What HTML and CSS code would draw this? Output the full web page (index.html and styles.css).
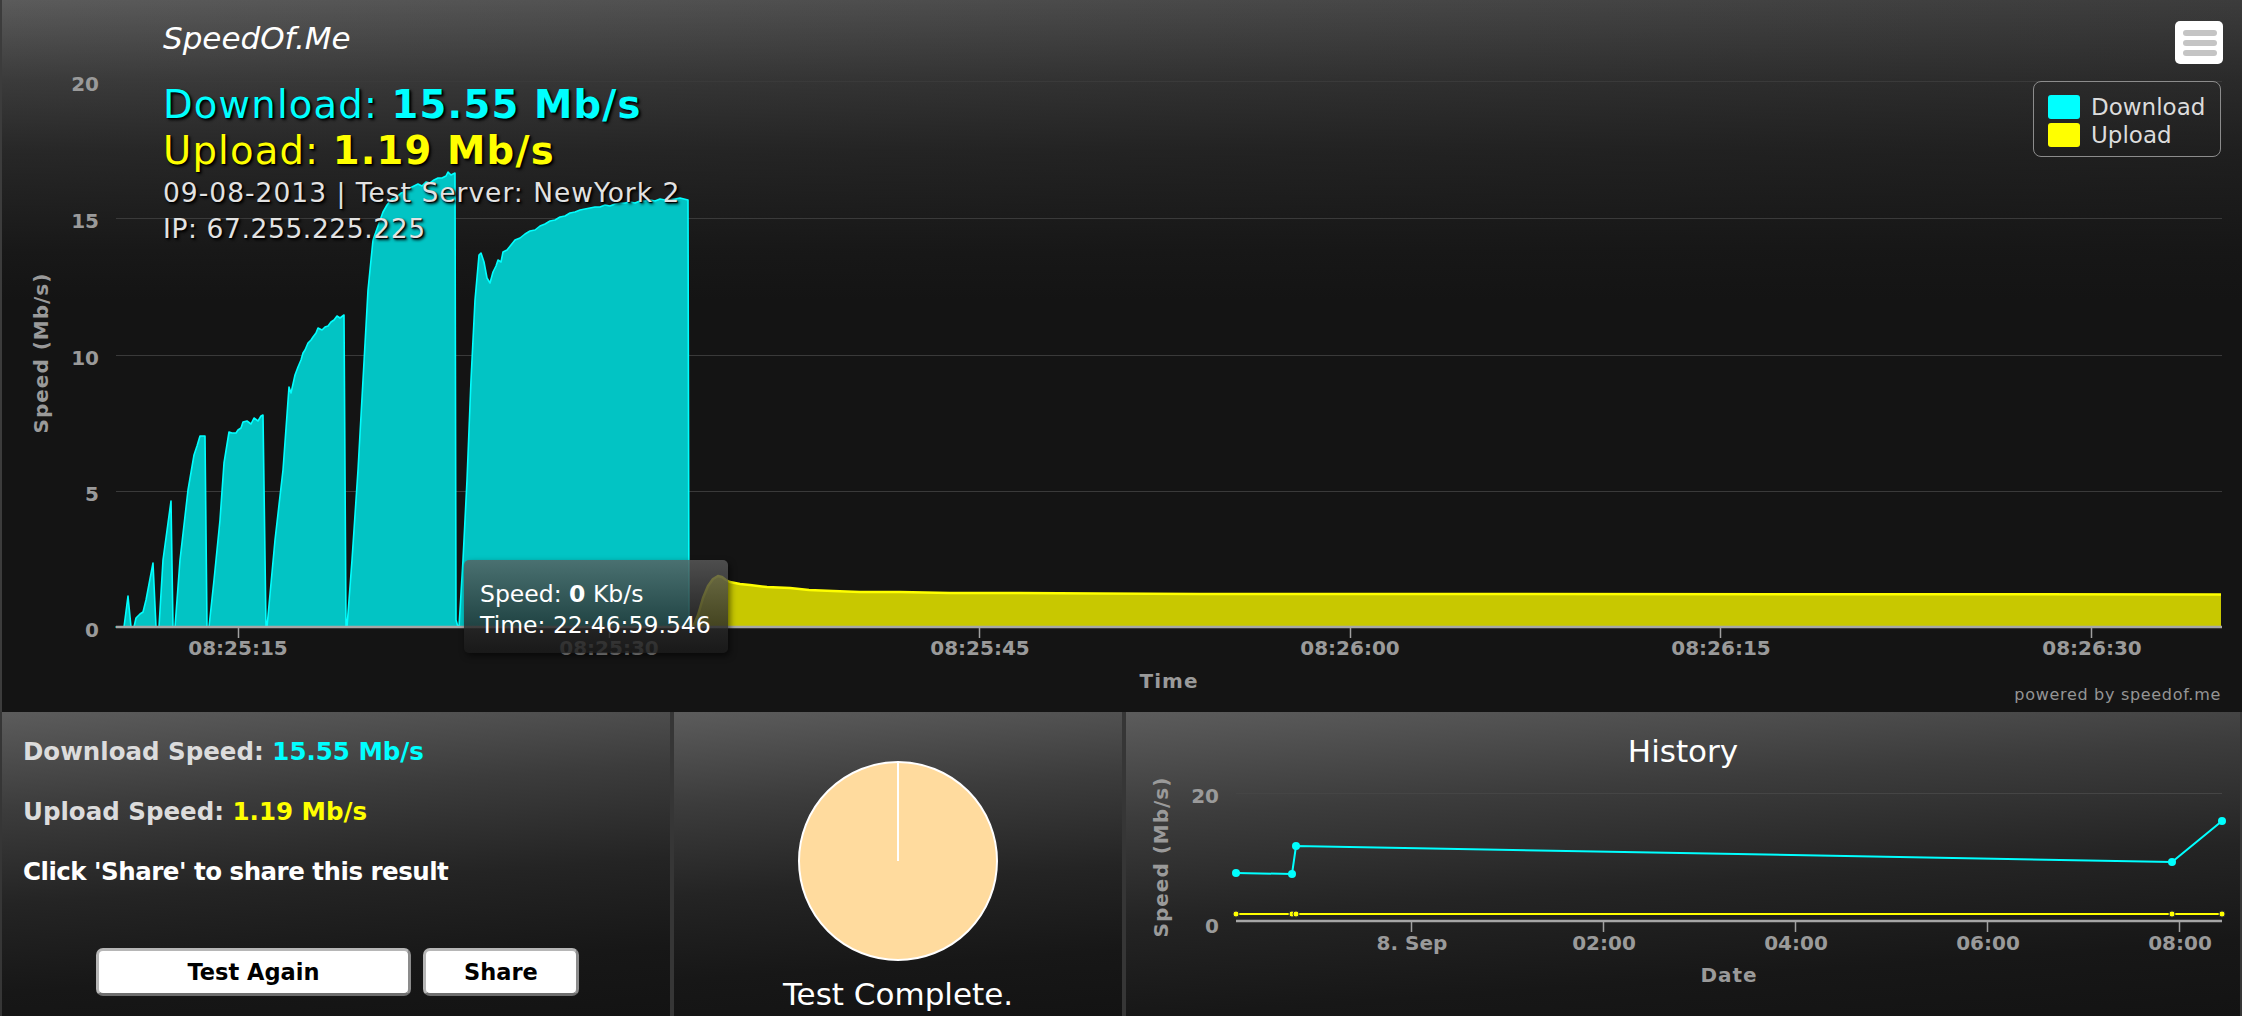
FILE: index.html
```html
<!DOCTYPE html>
<html lang="en">
<head>
<meta charset="utf-8">
<title>SpeedOf.Me</title>
<link rel="stylesheet" href="styles.css">
</head>
<body>
<div class="page">
  <section class="speed-chart">
    <svg class="plot" width="2242" height="712" viewBox="0 0 2242 712">
      <g class="grid">
        <line x1="116" x2="2222" y1="81.5" y2="81.5"/>
        <line x1="116" x2="2222" y1="218.5" y2="218.5"/>
        <line x1="116" x2="2222" y1="355.5" y2="355.5"/>
        <line x1="116" x2="2222" y1="491.5" y2="491.5"/>
      </g>
      <path class="dl-area" d="M116,627 L124,627 L128,596 L131,627 L134,627 L136,618 L140,614 L143,612 L146,600 L153,563 L156,627 L159,627 L163,560 L171,501 L173,627 L175,627 L180,560 L188,490 L194,455 L197,446 L200,436 L205,436 L207,627 L209,627 L214,580 L220,520 L224,463 L229,432 L232,433 L236,433 L238,430 L241,428 L243,422 L247,421 L251,424 L254,418 L258,421 L261,416 L263,415 L266,627 L267,627 L275,540 L283,470 L289,387 L291,393 L295,375 L298,367 L301,360 L303,353 L305,350 L308,343 L311,340 L313,337 L316,333 L318,328 L322,330 L325,327 L328,326 L331,322 L334,320 L337,316 L340,318 L344,315 L346,627 L347,627 L352,560 L358,470 L363,380 L368,290 L373,240 L378,226 L383,212 L387,205 L392,199 L397,197 L401,193 L405,192 L410,188 L414,186 L418,184 L422,186 L426,182 L430,183 L434,180 L438,178 L442,178 L446,176 L448,172 L451,175 L455,173 L456,620 L458,627 L459,627 L463,560 L467,480 L471,380 L475,300 L479,255 L481,253 L484,262 L487,278 L490,283 L493,272 L496,266 L498,260 L501,262 L503,252 L507,250 L511,245 L515,240 L520,238 L525,234 L530,231 L535,230 L540,226 L545,224 L550,221 L555,220 L560,217 L565,216 L570,213 L575,212 L580,210 L585,209 L590,208 L595,207 L600,207 L605,205 L610,206 L615,204 L620,203 L625,203 L630,202 L635,203 L640,201 L645,201 L650,200 L655,201 L660,199 L665,200 L670,199 L675,199 L680,198 L684,199 L688,200 L689,627 Z"/>
      <path class="ul-area" d="M689,627 L693,627 L698,615 L703,598 L708,586 L713,579 L718,576 L722,577 L726,580 L730,582 L740,584 L750,585 L767,587 L790,588 L809,590 L833,591 L860,592 L900,592 L950,593 L1019,593 L1100,593.5 L1200,594 L1500,594 L2221,594.5 L2221,627 Z"/>
      <polyline class="ul-line" points="693,627 698,615 703,598 708,586 713,579 718,576 722,577 726,580 730,582 740,584 750,585 767,587 790,588 809,590 833,591 860,592 900,592 950,593 1019,593 1100,593.5 1200,594 1500,594 2221,594.5"/>
      <line class="axis" x1="116" x2="2222" y1="627" y2="627"/>
      <g class="ticks">
        <line x1="238.5" x2="238.5" y1="628" y2="638"/>
        <line x1="609.5" x2="609.5" y1="628" y2="638"/>
        <line x1="979.5" x2="979.5" y1="628" y2="638"/>
        <line x1="1350.5" x2="1350.5" y1="628" y2="638"/>
        <line x1="1720.5" x2="1720.5" y1="628" y2="638"/>
        <line x1="2091.5" x2="2091.5" y1="628" y2="638"/>
      </g>
      <g class="axis-label x-labels">
        <text x="238" y="655">08:25:15</text>
        <text x="609" y="655">08:25:30</text>
        <text x="980" y="655">08:25:45</text>
        <text x="1350" y="655">08:26:00</text>
        <text x="1721" y="655">08:26:15</text>
        <text x="2092" y="655">08:26:30</text>
      </g>
      <g class="axis-label y-labels">
        <text x="99" y="91">20</text>
        <text x="99" y="228">15</text>
        <text x="99" y="365">10</text>
        <text x="99" y="501">5</text>
        <text x="99" y="637">0</text>
      </g>
      <text class="axis-title" x="1169" y="688">Time</text>
      <text class="axis-title" transform="translate(48,353) rotate(-90)">Speed (Mb/s)</text>
      <text class="powered" x="2221" y="700">powered by speedof.me</text>
    </svg>

    <div class="brand">SpeedOf.Me</div>

    <div class="summary">
      <div class="sum-dl">Download: <b>15.55 Mb/s</b></div>
      <div class="sum-ul">Upload: <b>1.19 Mb/s</b></div>
      <div class="sum-info">09-08-2013 | Test Server: NewYork 2</div>
      <div class="sum-info sum-ip">IP: 67.255.225.225</div>
    </div>

    <button class="menu-btn" type="button" aria-label="Menu"><span></span><span></span><span></span></button>

    <div class="legend">
      <div class="legend-item"><span class="swatch swatch-dl"></span>Download</div>
      <div class="legend-item"><span class="swatch swatch-ul"></span>Upload</div>
    </div>

    <div class="tooltip">
      <div>Speed: <b>0</b> Kb/s</div>
      <div>Time: 22:46:59.546</div>
    </div>
  </section>

  <section class="panels">
    <div class="panel result">
      <p class="stat">Download Speed: <span class="val-dl">15.55 Mb/s</span></p>
      <p class="stat">Upload Speed: <span class="val-ul">1.19 Mb/s</span></p>
      <p class="stat hint">Click 'Share' to share this result</p>
      <div class="buttons">
        <button class="btn btn-again" type="button">Test Again</button>
        <button class="btn btn-share" type="button">Share</button>
      </div>
    </div>

    <div class="panel status">
      <svg class="pie" width="202" height="202" viewBox="0 0 202 202">
        <circle cx="101" cy="101" r="99"/>
        <line x1="101" y1="2" x2="101" y2="101"/>
      </svg>
      <p class="status-text">Test Complete.</p>
    </div>

    <div class="panel history">
      <h2 class="history-title">History</h2>
      <svg class="history-chart" width="1116" height="245" viewBox="0 0 1116 245">
        <line class="h-grid" x1="112" x2="1098" y1="22.5" y2="22.5"/>
        <line class="axis" x1="112" x2="1098" y1="150" y2="150"/>
        <g class="ticks">
          <line x1="287.5" x2="287.5" y1="151" y2="161"/>
          <line x1="479.5" x2="479.5" y1="151" y2="161"/>
          <line x1="671.5" x2="671.5" y1="151" y2="161"/>
          <line x1="863.5" x2="863.5" y1="151" y2="161"/>
          <line x1="1055.5" x2="1055.5" y1="151" y2="161"/>
        </g>
        <g class="axis-label x-labels">
          <text x="288" y="179">8. Sep</text>
          <text x="480" y="179">02:00</text>
          <text x="672" y="179">04:00</text>
          <text x="864" y="179">06:00</text>
          <text x="1056" y="179">08:00</text>
        </g>
        <g class="axis-label y-labels">
          <text x="95" y="32">20</text>
          <text x="95" y="162">0</text>
        </g>
        <text class="axis-title" x="605" y="211">Date</text>
        <text class="axis-title" transform="translate(44,86) rotate(-90)">Speed (Mb/s)</text>
        <polyline class="h-ul" points="112,143 168,143 172,143 1048,143 1098,143"/>
        <polyline class="h-dl" points="112,102 168,103 172,75 1048,91 1098,50"/>
        <g class="h-dl-pt">
          <circle cx="112" cy="102" r="4"/>
          <circle cx="168" cy="103" r="4"/>
          <circle cx="172" cy="75" r="4"/>
          <circle cx="1048" cy="91" r="4"/>
          <circle cx="1098" cy="50" r="4"/>
        </g>
        <g class="h-ul-pt">
          <circle cx="112" cy="143" r="3"/>
          <circle cx="168" cy="143" r="3"/>
          <circle cx="172" cy="143" r="3"/>
          <circle cx="1048" cy="143" r="3"/>
          <circle cx="1098" cy="143" r="3"/>
        </g>
      </svg>
    </div>
  </section>
</div>
</body>
</html>
```

FILE: styles.css
```css
html, body {
  margin: 0;
  padding: 0;
}

body {
  background: #141414;
  font-family: "DejaVu Sans", "Liberation Sans", sans-serif;
  color: #fff;
  width: 2242px;
  height: 1016px;
  overflow: hidden;
}

.page {
  display: flex;
  flex-direction: column;
  width: 2242px;
  height: 1016px;
}

/* ---------- main speed chart ---------- */
.speed-chart {
  position: relative;
  height: 712px;
  flex: none;
  background:
    linear-gradient(180deg,
      rgba(20,20,20,0) 0,
      rgba(20,20,20,.45) 80px,
      rgba(20,20,20,.72) 150px,
      rgba(20,20,20,.94) 250px,
      #141414 300px),
    linear-gradient(90deg, #5b5b5b 0%, #4a4a4a 50%, #3c3c3c 100%);
  box-shadow: inset 2px 0 0 #3c3c3c;
}

.plot {
  display: block;
}

.grid line {
  stroke: #3a3a3a;
  stroke-width: 1;
}

.dl-area {
  fill: #02c4c4;
  stroke: #00ffff;
  stroke-width: 1.6;
  stroke-linejoin: round;
}

.ul-area {
  fill: #c8c800;
}

.ul-line {
  fill: none;
  stroke: #ffff00;
  stroke-width: 2.5;
  stroke-linejoin: round;
}

.axis {
  stroke: #a6a6a6;
  stroke-width: 2.5;
}

.ticks line {
  stroke: #a0a0a0;
  stroke-width: 1.5;
}

.axis-label text {
  fill: #9a9a9a;
  font-family: "DejaVu Sans", sans-serif;
  font-weight: bold;
  font-size: 20px;
}

.x-labels text {
  text-anchor: middle;
}

.y-labels text {
  text-anchor: end;
}

.axis-title {
  fill: #9a9a9a;
  font-family: "DejaVu Sans", sans-serif;
  font-weight: bold;
  font-size: 20px;
  letter-spacing: 1px;
  text-anchor: middle;
}

.powered {
  fill: #959595;
  font-family: "DejaVu Sans", sans-serif;
  font-size: 16px;
  letter-spacing: 0.7px;
  text-anchor: end;
}

.brand {
  position: absolute;
  left: 163px;
  top: 20px;
  font-size: 31px;
  line-height: 36px;
  font-style: italic;
  color: #fff;
}

.summary {
  position: absolute;
  left: 163px;
  top: 82px;
  text-shadow: 2px 2px 3px #000, 1px 1px 1px #000;
  white-space: nowrap;
}

.sum-dl,
.sum-ul {
  font-size: 38.5px;
  letter-spacing: 1.2px;
}

.sum-dl {
  line-height: 45px;
  color: #00ffff;
}

.sum-ul {
  line-height: 48px;
  color: #ffff00;
}

.sum-info {
  font-size: 26.5px;
  line-height: 36px;
  letter-spacing: 1px;
  color: #e2e2e2;
}

.sum-ip {
  letter-spacing: 0.6px;
}

.menu-btn {
  position: absolute;
  left: 2175px;
  top: 21px;
  width: 48px;
  height: 43px;
  box-sizing: border-box;
  padding: 9px 0 0 8px;
  margin: 0;
  border: 0;
  border-radius: 5px;
  background: #fff;
  display: flex;
  flex-direction: column;
  gap: 4px;
}

.menu-btn span {
  display: block;
  width: 34px;
  height: 6px;
  border-radius: 3px;
  background: #c4c4c4;
}

.legend {
  position: absolute;
  left: 2033px;
  top: 81px;
  width: 188px;
  height: 76px;
  box-sizing: border-box;
  border: 1.5px solid #8c8c8c;
  border-radius: 8px;
  padding: 11px 0 0 14px;
}

.legend-item {
  display: flex;
  align-items: center;
  gap: 11px;
  height: 28px;
  font-size: 23px;
  color: #dcdcdc;
}

.swatch {
  display: block;
  width: 32px;
  height: 24px;
  border-radius: 3px;
}

.swatch-dl { background: #00ffff; }
.swatch-ul { background: #ffff00; }

.tooltip {
  position: absolute;
  left: 464px;
  top: 560px;
  width: 264px;
  height: 93px;
  box-sizing: border-box;
  padding: 19px 0 0 16px;
  border-radius: 5px;
  background: linear-gradient(180deg, rgba(92,92,92,.8) 0%, rgba(40,40,40,.82) 70%, rgba(26,26,26,.85) 100%);
  box-shadow: 2px 3px 6px rgba(0,0,0,.55);
  color: #fff;
  font-size: 23.5px;
  line-height: 31px;
  white-space: nowrap;
}

/* ---------- bottom panels ---------- */
.panels {
  flex: none;
  height: 304px;
  display: grid;
  grid-template-columns: 672px 452px 1fr;
}

.panel {
  background: linear-gradient(176deg, #5c5c5c 0%, #3c3c3c 28%, #242424 55%, #171717 80%, #131313 100%);
  box-shadow: inset 2px 0 0 #363636, inset -2px 0 0 #363636;
  overflow: hidden;
}

.result {
  padding: 10px 0 0 23px;
}

.stat {
  margin: 0;
  font-size: 24.5px;
  font-weight: bold;
  line-height: 60px;
  color: #dcdcdc;
  white-space: nowrap;
}

.val-dl { color: #00ffff; }
.val-ul { color: #ffff00; }

.hint {
  color: #fff;
  letter-spacing: -0.5px;
}

.buttons {
  display: flex;
  gap: 12px;
  margin: 46px 0 0 73px;
}

.btn {
  height: 48px;
  box-sizing: border-box;
  margin: 0;
  padding: 0;
  background: #fff;
  border: 3px solid #b6b6b6;
  border-bottom-color: #6f6f6f;
  border-right-color: #8c8c8c;
  border-radius: 7px;
  font-family: "DejaVu Sans", sans-serif;
  font-size: 22.5px;
  font-weight: bold;
  color: #000;
}

.btn-again { width: 315px; }
.btn-share { width: 156px; }

.status {
  display: flex;
  flex-direction: column;
  align-items: center;
  padding-top: 48px;
}

.pie {
  display: block;
}

.pie circle {
  fill: #ffdb9e;
  stroke: #fff;
  stroke-width: 2;
}

.pie line {
  stroke: #fff;
  stroke-width: 2;
}

.status-text {
  margin: 12px 0 0;
  font-size: 31px;
  line-height: 40px;
  color: #fff;
}

.history {
  display: flex;
  flex-direction: column;
  align-items: center;
  padding-top: 19px;
}

.history-title {
  margin: 0;
  font-size: 31px;
  font-weight: normal;
  line-height: 40px;
  color: #fff;
}

.history-chart {
  display: block;
  align-self: flex-start;
}

.h-grid {
  stroke: #454545;
  stroke-width: 1;
}

.h-dl {
  fill: none;
  stroke: #00ffff;
  stroke-width: 2;
}

.h-ul {
  fill: none;
  stroke: #ffff00;
  stroke-width: 2;
}

.h-dl-pt circle {
  fill: #00ffff;
}

.h-ul-pt circle {
  fill: #ffff00;
  stroke: #333;
  stroke-width: 1;
}
```
